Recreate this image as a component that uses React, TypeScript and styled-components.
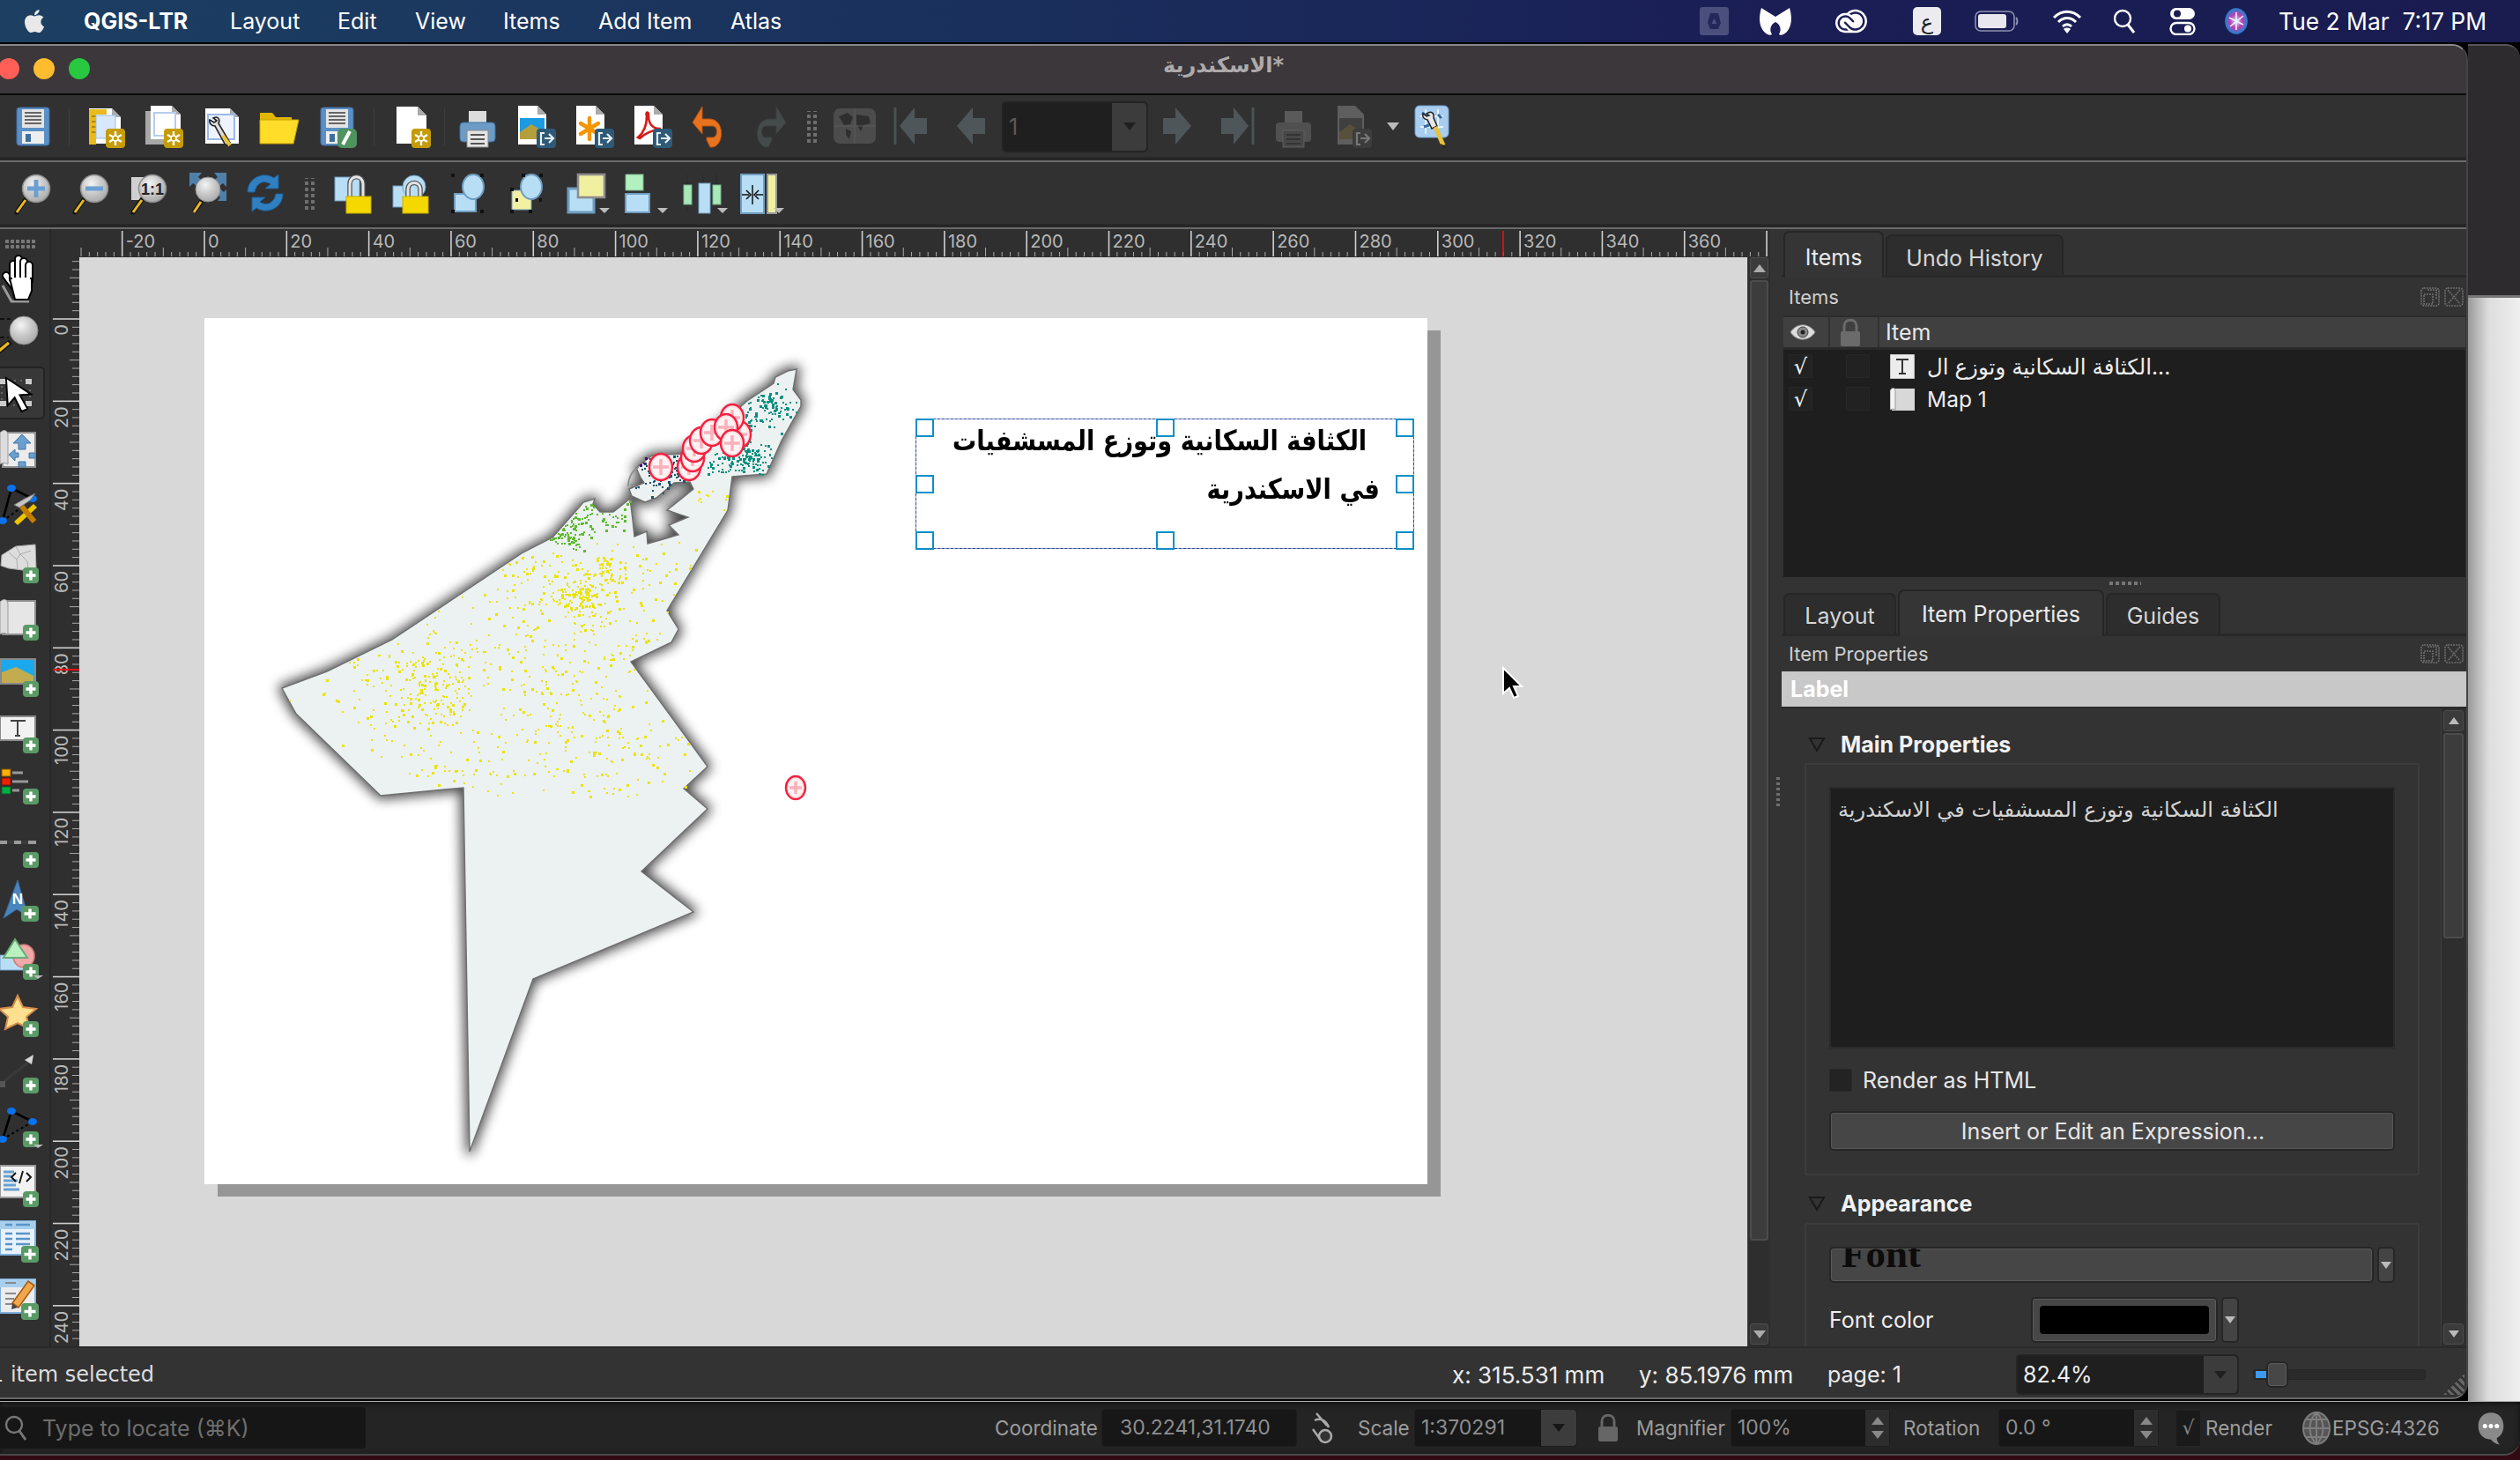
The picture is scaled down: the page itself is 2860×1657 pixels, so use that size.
import React from 'react';
import styled, { createGlobalStyle } from 'styled-components';
import { FaApple } from 'react-icons/fa';
import { SiAdobecreativecloud } from 'react-icons/si';

const Global = createGlobalStyle`
  html, body { margin: 0; padding: 0; width: 2860px; height: 1657px; overflow: hidden; background: #320a14; }
  body { font-family: Inter, "Noto Sans", "DejaVu Sans", sans-serif; }
  * { box-sizing: border-box; }
`;

/* ---------- page frame ---------- */
const Screen = styled.div`width:2860px;height:1657px;display:flex;flex-direction:column;overflow:hidden;`;
const MenuBar = styled.div`
  height:48px;flex:none;display:flex;align-items:center;color:#fff;font-size:25px;
  background:linear-gradient(90deg,#1c3f62 0%,#1a2f5c 40%,#1a1e55 70%,#1a1c50 100%);
`;
const AppleSlot = styled.span`margin-left:24px;width:71px;display:flex;`;
const MenuItem = styled.span<{ $w: number; $bold?: boolean }>`
  width:${p => p.$w}px;font-weight:${p => (p.$bold ? 700 : 400)};white-space:nowrap;
`;
const MenuRight = styled.div`margin-left:auto;display:flex;align-items:center;height:48px;padding-right:38px;`;
const TrayIcon = styled.span<{ $w: number }>`width:${p => p.$w}px;display:flex;justify-content:center;align-items:center;`;
const Clock = styled.span`font-size:26.4px;margin-left:20px;white-space:pre;`;

const Body = styled.div`height:1542px;flex:none;display:flex;background:#000;padding-top:2px;`;
const Win = styled.div`
  width:2801px;height:1538px;flex:none;display:flex;flex-direction:column;background:#333;
  border-top:2px solid #8a8788;border-right:2px solid #444;border-radius:0 18px 18px 0;overflow:hidden;position:relative;
  border-bottom:2px solid #666;
`;
const Strip = styled.div`flex:1;display:flex;flex-direction:column;`;
const StripDark = styled.div`height:288px;flex:none;background:#2e2b2e;border-top:2px solid #555;border-radius:0 16px 0 0;border-bottom:3px solid #777;`;
const StripLight = styled.div`flex:1;background:linear-gradient(90deg,#9a9a9a 0,#dedede 24px,#efefef 100%);`;

const TitleBar = styled.div`
  height:56px;flex:none;display:flex;justify-content:center;padding-top:8px;padding-right:22px;background:#3b373a;
  border-bottom:2px solid #0c0c0c;color:#aeaaac;font-size:24px;font-weight:700;font-family:"DejaVu Sans",sans-serif;
`;
const Lights = styled.div`position:absolute;left:-2px;top:14px;display:flex;gap:16px;`;
const Light = styled.span<{ $c: string }>`width:24px;height:24px;border-radius:50%;background:${p => p.$c};`;

const Toolbar = styled.div<{ $h: number; $pad: number }>`
  height:${p => p.$h}px;flex:none;display:flex;align-items:center;padding-left:${p => p.$pad}px;background:#313131;
  border-bottom:3px solid #262626;box-shadow:inset 0 -1px 0 #2a2a2a;
`;
const Rule = styled.div`height:2px;flex:none;background:#6a6a6a;`;
const Slot = styled.span<{ $w?: number }>`width:${p => p.$w ?? 66}px;flex:none;display:flex;justify-content:center;align-items:center;`;
const Sep = styled.span<{ $w: number }>`width:${p => p.$w}px;flex:none;display:flex;justify-content:center;align-items:center;&::after{content:"";width:1px;height:42px;background:#3d3d3d;}`;
const Grip = styled.span<{ $w: number }>`
  width:${p => p.$w}px;flex:none;display:flex;justify-content:center;
  &::after{content:"";width:11px;height:36px;background:repeating-linear-gradient(0deg,#6e6e6e 0 4px,transparent 4px 7px);
  -webkit-mask:repeating-linear-gradient(90deg,#000 0 4px,transparent 4px 7px);}
`;
const PageCombo = styled.div`
  width:166px;height:58px;flex:none;margin:0 0 0 2px;display:flex;border:2px solid #242424;border-radius:5px;background:#1f1f1f;
`;
const PageValue = styled.span`flex:1;color:#5a5a5a;font-size:25px;padding:12px 0 0 6px;`;
const ComboDrop = styled.span<{ $w: number }>`width:${p => p.$w}px;flex:none;display:flex;align-items:center;justify-content:center;background:#3c3c3c;border-radius:0 4px 4px 0;`;
const Tri = styled.span<{ $up?: boolean; $c?: string; $s?: number }>`
  width:0;height:0;border-left:${p => p.$s ?? 7}px solid transparent;border-right:${p => p.$s ?? 7}px solid transparent;
  ${p => (p.$up ? 'border-bottom' : 'border-top')}:${p => (p.$s ?? 7) + 2}px solid ${p => p.$c ?? '#aaa'};
`;

/* ---------- main area ---------- */
const MainRow = styled.div`flex:1;min-height:0;display:flex;`;
const SideTools = styled.div`width:58px;flex:none;display:flex;flex-direction:column;background:#303030;border-right:2px solid #282828;overflow:hidden;`;
const SideGrip = styled.div`
  height:25px;flex:none;margin:12px 0 0 6px;width:34px;
  background:repeating-linear-gradient(90deg,#777 0 4px,transparent 4px 6px);
  -webkit-mask:repeating-linear-gradient(0deg,#000 0 4px,transparent 4px 6px);max-height:10px;
`;
const SideSpacer = styled.div`height:3px;flex:none;`;
const SideSlot = styled.div<{ $on?: boolean }>`
  height:64.3px;flex:none;display:flex;align-items:center;width:${p => (p.$on ? 51 : 58)}px;position:relative;
  ${p => (p.$on ? 'border:2px solid #232323;border-left:none;border-radius:0 5px 5px 0;background:#383838;height:60px;margin:2px 0;' : '')}
`;
const Centre = styled.div`width:1951px;flex:none;display:grid;grid-template-columns:32px 1893px 26px;grid-template-rows:32px 1fr;min-height:0;`;
const HRulerCell = styled.div`grid-column:1 / 4;padding-left:32px;background:#2f2f2f;overflow:hidden;display:flex;`;
const VRulerCell = styled.div`background:#2f2f2f;overflow:hidden;display:flex;`;
const Canvas = styled.div`background:#d8d8d8;position:relative;overflow:hidden;padding:69px 0 0 142px;`;
const Sheet = styled.div`width:1388px;height:983px;background:#fff;box-shadow:15px 14px 0 #969696;position:relative;`;
const MapSvg = styled.svg`position:absolute;left:0;top:0;`;
const Cursor = styled.svg`position:absolute;left:1614px;top:464px;`;
const LabelBox = styled.div`
  position:absolute;left:807px;top:114px;width:566px;height:148px;
  border:1px dashed #7a0f55;outline:1px solid rgba(20,110,190,.55);outline-offset:-1px;
  display:flex;flex-direction:column;align-items:flex-end;
  font-family:"DejaVu Sans",sans-serif;font-weight:700;color:#000;font-size:32px;line-height:56px;
`;
const LabelLine = styled.div<{ $mr: number; $mt: number }>`margin:${p => p.$mt}px ${p => p.$mr}px 0 0;white-space:nowrap;transform:scaleX(.85);transform-origin:right center;`;
const Handle = styled.span<{ $x: number; $y: number }>`
  position:absolute;width:21px;height:21px;border:2px solid #0f8fc7;background:transparent;
  left:${p => p.$x}px;top:${p => p.$y}px;
`;

const VScroll = styled.div<{ $t: number; $b: number }>`
  display:flex;flex-direction:column;background:#2e2e2e;border-left:1px solid #3e3e3e;height:100%;padding:${p => p.$t}px 2px ${p => p.$b}px;width:100%;
`;
const ScrollBtn = styled.div`height:24px;flex:none;display:flex;align-items:center;justify-content:center;background:#3b3b3b;border:1px solid #4c4c4c;border-radius:3px;`;
const ScrollThumb = styled.div<{ $h: number }>`height:${p => p.$h}px;flex:none;margin-top:2px;background:#3c3c3c;border:2px solid #4c4c4c;border-radius:3px;`;
const ScrollFill = styled.div`flex:1;`;

const Splitter = styled.div`width:13px;flex:none;position:relative;background:#333;`;
const SplitGrip = styled.span`
  position:absolute;left:7px;top:621px;width:4px;height:34px;background:repeating-linear-gradient(0deg,#6e6e6e 0 3px,transparent 3px 6px);
`;
const Panel = styled.div`flex:1;min-width:0;display:flex;flex-direction:column;background:#333;`;
const TabStrip = styled.div<{ $h: number }>`height:${p => p.$h}px;flex:none;display:flex;align-items:flex-end;gap:2px;padding-left:2px;border-bottom:3px solid #292929;`;
const Tab = styled.div<{ $w: number; $on?: boolean; $dy: number }>`
  width:${p => p.$w}px;height:${p => (p.$on ? 53 : 46)}px;flex:none;display:flex;align-items:center;justify-content:center;
  font-size:25px;color:${p => (p.$on ? '#eaeaea' : '#d6d6d6')};background:${p => (p.$on ? '#353535' : '#2d2d2d')};
  border:2px solid #262626;border-bottom:none;border-radius:7px 7px 0 0;margin-bottom:${p => (p.$on ? -3 : 0)}px;
  padding-top:${p => p.$dy}px;
`;
const DockTitle = styled.div<{ $h: number }>`height:${p => p.$h}px;flex:none;display:flex;align-items:center;justify-content:space-between;padding:0 3px 0 8px;font-size:22px;color:#cfcfcf;`;
const DockBtns = styled.span`display:flex;gap:5px;`;
const Tree = styled.div`height:297px;flex:none;margin:0 1px 0 2px;background:#1e1e1e;display:flex;flex-direction:column;`;
const TreeHead = styled.div`height:39px;flex:none;display:flex;background:#404040;border-top:2px solid #2c2c2c;border-bottom:3px solid #2a2a2a;color:#e8e8e8;font-size:25px;`;
const HeadCell = styled.span<{ $w: number }>`width:${p => p.$w}px;flex:none;display:flex;align-items:center;justify-content:center;border-right:2px solid #303030;padding-right:8px;`;
const HeadText = styled.span`padding-left:7px;display:flex;align-items:center;`;
const TreeRow = styled.div`height:37px;flex:none;display:flex;align-items:center;padding-left:6px;color:#ededed;font-size:25px;`;
const RowCheck = styled.span<{ $mr: number }>`width:27px;height:27px;flex:none;background:#222;border:1px solid #262626;margin-right:${p => p.$mr}px;display:flex;align-items:center;justify-content:center;color:#f4f4f4;font-size:24px;font-family:"DejaVu Sans",sans-serif;`;
const RowText = styled.span`margin-left:14px;font-family:Inter,"DejaVu Sans",sans-serif;font-size:24.5px;`;
const Handlebar = styled.div`height:14px;flex:none;display:flex;justify-content:center;align-items:center;padding-left:2px;&::after{content:"";width:36px;height:4px;background:repeating-linear-gradient(90deg,#777 0 4px,transparent 4px 7px);}`;
const SectionBar = styled.div`height:40px;flex:none;background:#c8c8c8;color:#fff;font-weight:700;font-size:25px;display:flex;align-items:center;padding-left:10px;margin-right:-2px;`;
const PropsRow = styled.div`flex:1;min-height:0;display:flex;border-top:2px solid #2a2a2a;`;
const PropsBody = styled.div`flex:1;min-width:0;overflow:hidden;padding:0 24px 0 26px;`;
const PropsScroll = styled.div`width:28px;flex:none;margin-right:1px;`;
const GroupHead = styled.div<{ $mt: number }>`display:flex;align-items:center;height:30px;margin-top:${p => p.$mt}px;color:#f2f2f2;font-weight:700;font-size:25px;gap:17px;padding-left:4px;`;
const GroupBox = styled.div<{ $h: number; $mt: number }>`height:${p => p.$h}px;margin-top:${p => p.$mt}px;border:2px solid #3c3c3c;border-radius:2px;padding:25px 26px 0 26px;`;
const TextArea = styled.div`height:297px;background:#1e1e1e;border:2px solid #2a2a2a;color:#d4d4d4;font-family:"DejaVu Sans",sans-serif;font-size:24px;display:flex;justify-content:flex-start;padding:10px 0 0 8px;`;
const ArabicRun = styled.span`white-space:nowrap;`;
const CheckRow = styled.div`display:flex;align-items:center;gap:12px;margin-top:21px;height:29px;color:#e6e6e6;font-size:25px;`;
const CheckBoxEmpty = styled.span`width:26px;height:26px;background:#232323;border:1px solid #2a2a2a;`;
const WideButton = styled.div`height:45px;margin-top:21px;border:2px solid #262626;border-radius:5px;background:#464646;box-shadow:inset 0 0 0 1px #565656;color:#e6e6e6;font-size:25px;display:flex;align-items:center;justify-content:center;padding-left:2px;`;
const FontRow = styled.div`display:flex;gap:4px;`;
const FontBtn = styled.div`width:621px;height:41px;border:2px solid #262626;border-radius:5px;background:#464646;box-shadow:inset 0 0 0 1px #585858;overflow:hidden;padding-left:12px;font-family:"Liberation Serif",serif;font-size:45px;font-weight:700;color:#0c0c0c;line-height:12px;`;
const MiniDrop = styled.div<{ $h: number }>`width:20px;height:${p => p.$h}px;border:2px solid #262626;border-radius:5px;background:#444;display:flex;align-items:center;justify-content:center;`;
const ColorRow = styled.div`display:flex;align-items:center;margin-top:16px;`;
const ColorLabel = styled.span`width:229px;color:#efefef;font-size:25px;`;
const ColorBtn = styled.div`width:212px;height:52px;border:2px solid #262626;border-radius:5px;background:#474747;box-shadow:inset 0 0 0 1px #5a5a5a;padding:8px;margin-right:4px;`;
const Swatch = styled.div`width:100%;height:100%;background:#000;border-radius:4px;`;

/* ---------- status ---------- */
const StatusBar = styled.div`height:58px;flex:none;display:flex;align-items:center;background:#333;border-top:2px solid #2a2a2a;color:#ececec;font-size:25px;position:relative;padding-top:4px;`;
const SelectedText = styled.span`width:1659px;margin-left:-11px;flex:none;white-space:nowrap;font-family:"DejaVu Sans",sans-serif;font-size:24px;color:#dcdcdc;`;
const StatusText = styled.span<{ $w: number; $fs?: number }>`width:${p => p.$w}px;flex:none;white-space:nowrap;font-size:${p => p.$fs ?? 25}px;`;
const ZoomCombo = styled.div`width:253px;height:46px;flex:none;display:flex;background:#1f1f1f;border:2px solid #242424;border-radius:5px;margin:0 0 0 -4px;`;
const ZoomValue = styled.span`flex:1;padding-left:6px;color:#f0f0f0;font-size:25px;line-height:42px;`;
const SliderWrap = styled.div`width:196px;height:12px;margin:0 0 0 16px;background:#2a2a2a;border:1px solid #262626;border-radius:3px;position:relative;`;
const SliderFill = styled.span`position:absolute;left:2px;top:1px;width:14px;height:8px;background:#3a9bf0;`;
const SliderKnob = styled.span`position:absolute;left:14px;top:-10px;width:25px;height:30px;background:#474747;border:2px solid #262626;border-radius:6px;box-shadow:inset 0 0 0 1px #5c5c5c;`;
const CornerGrip = styled.span`position:absolute;right:2px;bottom:3px;width:24px;height:24px;background:repeating-linear-gradient(45deg,#666 0 3px,transparent 3px 6px);clip-path:polygon(100% 0,100% 100%,0 100%);`;

const BottomBar = styled.div`
  height:62px;flex:none;display:flex;align-items:center;background:#242424;border-top:1px solid #b0b0b0;
  border-bottom:2px solid #4a4a4a;border-radius:0 0 18px 0;color:#9d9d9d;font-size:22.500px;box-shadow:inset 0 2px 6px #111;
`;
const LocateBox = styled.div`width:415px;height:47px;flex:none;display:flex;align-items:center;gap:17px;padding-left:5px;background:#161616;border-radius:4px;color:#6e6e6e;font-size:25px;`;
const BarText = styled.span<{ $ml: number; $w: number }>`margin-left:${p => p.$ml}px;flex:none;width:${p => p.$w}px;white-space:nowrap;`;
const BarField = styled.div<{ $w: number }>`width:${p => p.$w}px;height:43px;flex:none;display:flex;background:#171717;border-radius:4px;color:#8e8e8e;font-size:23px;border:1px solid #1d1d1d;`;
const FieldValue = styled.span<{ $pl?: number }>`flex:1;padding-left:${p => p.$pl ?? 7}px;line-height:40px;white-space:nowrap;`;
const SpinCol = styled.span`width:27px;flex:none;display:flex;flex-direction:column;justify-content:space-around;align-items:center;background:#2d2d2d;padding:5px 0;`;
const BarIcon = styled.span<{ $ml: number }>`margin-left:${p => p.$ml}px;display:flex;flex:none;`;
const BarCheck = styled.span`margin-left:20px;width:27px;height:40px;background:#1a1a1a;display:flex;align-items:center;justify-content:center;color:#888;font-size:22px;font-family:"DejaVu Sans",sans-serif;flex:none;`;
const Desktop = styled.div`flex:1;background:#320a14;`;
const HiddenDefs = styled.svg`position:absolute;width:0;height:0;`;

/* ---------- icons ---------- */
const Ic = styled.svg.attrs({ width: 48, height: 48, viewBox: '0 0 48 48' })`display:block;overflow:visible;`;
const Sd = styled.svg.attrs({ width: 48, height: 56, viewBox: '0 0 48 56' })`display:block;overflow:visible;`;

const Gold = ({ x = 25, y = 26 }: { x?: number; y?: number }) => (
  <g transform={`translate(${x} ${y})`}>
    <rect width="22" height="22" rx="4" fill="#c59c07" />
    <path d="M11 3v16M4 7l14 8M18 7L4 15" stroke="#fff" strokeWidth="2.4" />
    <circle cx="11" cy="11" r="3" fill="#c59c07" stroke="#fff" strokeWidth="1.5" />
  </g>
);
const Exp = ({ c = '#2e5a78', l = '#e8eef2' }: { c?: string; l?: string }) => (
  <g transform="translate(25 26)">
    <rect width="22" height="22" rx="4" fill={c} />
    <path d="M9 5H5v13h4M9 11h9M14 6l5 5-5 5" stroke={l} strokeWidth="2.2" fill="none" />
  </g>
);
const Plus = ({ x = 26, y = 35 }: { x?: number; y?: number }) => (
  <g transform={`translate(${x} ${y})`}>
    <rect width="18" height="18" rx="4" fill="#5a9a66" />
    <path d="M9 3.5v11M3.5 9h11" stroke="#fff" strokeWidth="3.4" />
  </g>
);
const Doc = ({ x = 8, y = 1, w = 32, h = 42, f = '#fff', c = '#aaa' }: any) => (
  <g>
    <path d={`M${x} ${y}h${w - 10}l10 10v${h - 10}h-${w}z`} fill={f} />
    <path d={`M${x + w - 10} ${y}v10h10z`} fill={c} />
  </g>
);
const Floppy = ({ body = '#5b90c6', edge = '#3f6f9f' }: any) => (
  <g>
    <rect x="5" y="2" width="37" height="43" rx="3" fill={body} stroke={edge} />
    <rect x="11" y="4" width="25" height="21" fill="#e4e4e4" />
    <path d="M14 8h19M14 12h19M14 16h19M14 20h19" stroke="#666" strokeWidth="2" />
    <rect x="11" y="29" width="25" height="14" fill="#eee" />
    <rect x="15" y="32" width="6" height="9" fill="#3f6f9f" />
  </g>
);
const Mag = ({ children }: any) => (
  <g>
    <path d="M6 45l11-16" stroke="#111" strokeWidth="5" strokeLinecap="round" />
    <path d="M6 45l10-14" stroke="#e8b923" strokeWidth="3" />
    <circle cx="28" cy="18" r="15.5" fill="url(#glass)" stroke="#8d8d8d" strokeWidth="1.5" />
    {children}
  </g>
);
const Blue = '#b8def5', BEdge = '#6f9cc0';
const Shackle = ({ d }: { d: string }) => (
  <g>
    <path d={d} fill="none" stroke="#555" strokeWidth="5.500" />
    <path d={d} fill="none" stroke="#e4e4e4" strokeWidth="3" />
  </g>
);

const ToolIcons = {
  save: <Ic><Floppy /></Ic>,
  newLayout: <Ic><Doc x={6} y={3} w={36} h={40} /><rect x={6} y={4} width={20} height={6} fill="#e9b91d" /><rect x={6} y={4} width={8} height={40} fill="#e9b91d" /><path d="M9 12h5M9 18h5M9 24h5M9 30h5" stroke="#9a7b10" strokeWidth="1.5" /><rect x={14} y={11} width={22} height={26} fill="#d8e8fb" stroke="#9cc0e8" /><Gold /></Ic>,
  dup: <Ic><rect x={4} y={6} width={30} height={38} fill="#a8a8a8" /><Doc x={10} y={0} w={34} h={38} /><rect x={14} y={8} width={24} height={26} fill="#fff" stroke="#b6ccee" strokeWidth="2" /><Gold /></Ic>,
  mgr: <Ic><Doc x={6} y={3} w={38} h={40} /><rect x={9} y={10} width={30} height={28} fill="#eef3ff" stroke="#9cb9e8" strokeWidth="2" /><path d="M15 14c6-3 8 2 6 6l13 22-5 3-12-22c-4 0-7-3-6-7l5 3 3-2z" fill="#ddd" stroke="#222" strokeWidth="1.6" /><path d="M26 34l8 11" stroke="#e8c13a" strokeWidth="4" /></Ic>,
  folder: <Ic><path d="M2 8h14l4 5h18v5H2z" fill="#e2b700" /><path d="M2 16h44l-6 27H2z" fill="#ffdd28" stroke="#c9a400" /></Ic>,
  saveAs: <Ic><Floppy /><rect x={24} y={26} width={22} height={22} rx={5} fill="#4f935f" /><path d="M30 44l8-15" stroke="#fff" strokeWidth="4" /></Ic>,
  addPage: <Ic><Doc x={8} y={1} w={34} h={42} /><Gold x={25} y={26} /></Ic>,
  print: <Ic><rect x={14} y={6} width={20} height={16} fill="#ddd" /><rect x={4} y={19} width={40} height={22} rx={4} fill="#6c9cc6" stroke="#3f6f9f" /><rect x={12} y={28} width={24} height={19} fill="#e4e4e4" stroke="#888" /><path d="M16 33h16M16 38h16M16 43h16" stroke="#555" strokeWidth="2" /></Ic>,
  expImg: <Ic><Doc x={4} y={0} w={32} h={44} /><rect x={6} y={14} width={28} height={24} fill="#1d9be0" /><path d="M6 38V30l13-9 15 9v8z" fill="#b59f3c" /><Exp /></Ic>,
  expSvg: <Ic><Doc x={4} y={0} w={32} h={44} /><path d="M19 14v24M9 20l20 12M29 20L9 32" stroke="#f59500" strokeWidth="4.4" strokeLinecap="round" /><Exp /></Ic>,
  expPdf: <Ic><Doc x={4} y={0} w={32} h={44} /><path d="M8 36c6-5 10-14 10-24-2-6 3-6 2 0 0 8 5 15 14 14-10 2-18 5-24 11z" fill="none" stroke="#d61a1a" strokeWidth="2.6" /><Exp /></Ic>,
  undo: <Ic><path d="M15 1L4 19l11 13v-9h12c6 0 6 13 0 13h-7v3l4 8c16 2 18-32-1-32h-8z" fill="#e8731f" stroke="#b85510" /></Ic>,
  redo: <Ic><path d="M33 1l11 18-11 13v-9H21c-6 0-6 13 0 13h7v3l-4 8C8 49 6 15 25 15h8z" fill="#454a4a" stroke="#3a3e3e" /></Ic>,
  atlas: <Ic><rect x={0} y={3} width={48} height={40} rx={7} fill="#4c4c4c" /><path d="M6 12l10-4 6 5-3 8-7 1zM26 10l14 2 2 8-8 2-3 7-5-8zM14 26l6 3-2 9-4-5z" fill="#2f2f2f" /><path d="M0 23h48M24 3v40" stroke="#5a5a5a" /></Ic>,
  first: <Ic><path d="M4 2v42" stroke="#4b5154" strokeWidth="3" /><path d="M26 2L9 23l17 21V32h14V14H26z" fill="#4f565a" /></Ic>,
  prev: <Ic><path d="M26 2L8 23l18 21V32h14V14H26z" fill="#4f565a" /></Ic>,
  next: <Ic><path d="M22 2l18 21-18 21V32H8V14h14z" fill="#4f565a" /></Ic>,
  last: <Ic><path d="M44 2v42" stroke="#4b5154" strokeWidth="3" /><path d="M22 2l17 21-17 21V32H8V14h14z" fill="#4f565a" /></Ic>,
  printDim: <Ic><rect x={14} y={6} width={20} height={16} fill="#5a5a5a" /><rect x={4} y={19} width={40} height={22} rx={4} fill="#505050" /><rect x={12} y={28} width={24} height={19} fill="#484848" stroke="#5e5e5e" /><path d="M16 33h16M16 38h16M16 43h16" stroke="#333" strokeWidth="2" /></Ic>,
  expDim: <Ic><path d="M8 0h20l10 10v34H8z" fill="#5e5e5e" /><rect x={10} y={14} width={26} height={24} fill="#3f3f3f" /><path d="M10 38v-8l12-9 14 9v8z" fill="#57503a" /><Exp c="#3c3c3c" l="#777" /></Ic>,
  atlasCfg: <Ic><rect x={2} y={0} width={38} height={36} rx={5} fill="#a9cdef" stroke="#6e9fd0" /><path d="M8 12h26M8 24h26M14 4v28M28 4v28" stroke="#e6f1fc" strokeWidth="2" /><path d="M10 8l6 4M12 24l6-2M28 10l4 4" stroke="#3a6a9c" strokeWidth="3" /><path d="M15 9c6-4 9 0 8 5l4 9-6 3-5-10c-4-1-6-3-5-7l4 3 3-1z" fill="#e6e6e6" stroke="#222" strokeWidth="1.5" /><path d="M25 24l9 21" stroke="#e8c13a" strokeWidth="5" /><path d="M31 44l5 3" stroke="#222" strokeWidth="2" /></Ic>,

  zoomIn: <Ic><Mag><path d="M28 8v20M18 18h20" stroke="#6aa0d4" strokeWidth="5" /></Mag></Ic>,
  zoomOut: <Ic><Mag><path d="M18 18h20" stroke="#6aa0d4" strokeWidth="5" /></Mag></Ic>,
  zoomOne: <Ic><rect x={4} y={5} width={26} height={26} fill="#d0d0d0" /><Mag><text x={28} y={25} fontSize="18" fontFamily="Liberation Sans, sans-serif" fill="#222" textAnchor="middle" fontWeight="700">1:1</text></Mag></Ic>,
  zoomFull: <Ic><path d="M4 0h14l-4 5 6 5-5 7-7-5-4 4zM46 0H32l4 5-6 5 5 7 7-5 4 4zM46 32H36l3-4-6-5 5-5 5 4 3-3z" fill="#4f80aa" /><path d="M9 45l9-13" stroke="#111" strokeWidth="5" /><path d="M9 45l8-12" stroke="#e8b923" strokeWidth="3" /><circle cx={25} cy={19} r={14} fill="url(#glass)" stroke="#8d8d8d" /></Ic>,
  refresh: <Ic><path d="M4 22C4 6 22-2 34 6l5-4v16H24l6-5c-7-5-16-2-18 9z" fill="#2f7fc1" stroke="#1f5f96" /><path d="M44 24c0 16-18 24-30 16l-5 4V28h15l-6 5c7 5 16 2 18-9z" fill="#2f7fc1" stroke="#1f5f96" /></Ic>,
  lock: <Ic><rect x={2} y={5} width={28} height={27} fill={Blue} stroke={BEdge} /><Shackle d="M19 28V13c0-11 15-11 15 0v15" /><rect x={15} y={27} width={28} height={19} fill="#f5d800" stroke="#c4ad00" /></Ic>,
  lock2: <Ic><rect x={2} y={15} width={22} height={24} fill={Blue} stroke={BEdge} /><circle cx={26} cy={16} r={13} fill={Blue} stroke={BEdge} /><Shackle d="M19 28V19c0-10 14-10 14 0v9" /><rect x={13} y={27} width={29} height={19} fill="#f5d800" stroke="#c4ad00" /></Ic>,
  group: <Ic><rect x={6} y={24} width={24} height={20} fill={Blue} stroke={BEdge} strokeWidth="2" /><ellipse cx={27} cy={16} rx={12} ry={14} fill={Blue} stroke={BEdge} strokeWidth="2" /><path d="M2 1h4v4H2zM35 1h4v4h-4zM2 42h4v4H2zM35 42h4v4h-4z" fill="#111" /></Ic>,
  ungroup: <Ic><rect x={5} y={20} width={22} height={22} fill="#f2f0a3" stroke={BEdge} /><ellipse cx={27} cy={16} rx={12} ry={14} fill={Blue} stroke={BEdge} strokeWidth="2" /><path d="M16 1h4v4h-4zM36 1h4v4h-4zM3 17h4v4H3zM9 29h3v4H9zM3 42h4v4H3zM24 42h4v4h-4zM36 29h3v4h-3z" fill="#111" /></Ic>,
  raise: <Ic><rect x={3} y={18} width={29} height={27} fill={Blue} stroke={BEdge} strokeWidth="3" /><rect x={14} y={2} width={30} height={26} fill="#f1f0a0" stroke="#8d8d8d" strokeWidth="2.6" /><path d="M38 40h12l-6 6z" fill="#bbb" /></Ic>,
  alignIcon: <Ic><path d="M2 0v48" stroke="#1e1e1e" strokeWidth="1.5" /><rect x={2} y={2} width={20} height={18} fill="#b2f0c0" stroke="#7bb58a" /><rect x={2} y={24} width={27} height={21} fill={Blue} stroke={BEdge} strokeWidth="2" /><path d="M38 40h12l-6 6z" fill="#bbb" /></Ic>,
  distribute: <Ic><path d="M6 2v42M24 2v42M39 2v42" stroke="#2a2a2a" /><rect x={2} y={14} width={9} height={22} fill="#a9e8b8" stroke="#7bb58a" /><rect x={19} y={12} width={13} height={34} fill={Blue} stroke={BEdge} /><rect x={35} y={14} width={9} height={22} fill="#a9e8b8" stroke="#7bb58a" /><path d="M40 40h12l-6 6z" fill="#bbb" /></Ic>,
  resize: <Ic><rect x={1} y={2} width={26} height={44} fill={Blue} stroke={BEdge} strokeWidth="2" /><rect x={31} y={2} width={10} height={44} fill="#f1f0a0" stroke="#999" strokeWidth="2" /><path d="M14 14v22M2 25h8M7 20l5 5-5 5M26 25h-8M21 20l-5 5 5 5" stroke="#111" strokeWidth="1.5" fill="none" /><path d="M38 40h12l-6 6z" fill="#bbb" /></Ic>,
};

const Finger = ({ d }: { d: string }) => (
  <g>
    <path d={d} stroke="#000" strokeWidth="10" strokeLinecap="round" />
    <path d={d} stroke="#fff" strokeWidth="6" strokeLinecap="round" />
  </g>
);
const Side = {
  hand: <Sd><path d="M6 32l10 18h20" fill="none" stroke="#999" strokeWidth="3" transform="translate(-3 3)" /><Finger d="M7 24l9 12" /><Finger d="M15 28V11" /><Finger d="M21 28V5" /><Finger d="M27 28V8" /><Finger d="M33 30V12" /><path d="M11 27h25v14l-4 10H17z" fill="#fff" stroke="#000" strokeWidth="2" /><path d="M14 26h20v8H14z" fill="#fff" /></Sd>,
  zoom: <Sd><path d="M0 9h12M0 30h10" stroke="#111" strokeWidth="2" strokeDasharray="5 3" /><path d="M-2 46l14-11" stroke="#111" strokeWidth="6" /><path d="M-2 46l12-10" stroke="#e8b923" strokeWidth="3.4" /><circle cx={27} cy={22} r={16} fill="url(#glass)" stroke="#8c8c8c" /></Sd>,
  select: <Sd><rect x={2} y={14} width={32} height={28} fill="none" stroke="#666" strokeWidth="2" strokeDasharray="2 5" /><path d="M0 12h7v6H0zM29 12h7v6h-7zM0 37h7v6H0zM29 37h7v6h-7z" fill="#ccc" /><path d="M7 11l29 19-13 1 9 16-7 3-8-16-8 9z" fill="#fff" stroke="#000" strokeWidth="2" transform="translate(0 0) scale(0.98)" /></Sd>,
  move: <Sd><rect x={3} y={9} width={37} height={39} fill="#ececec" stroke="#8f8f8f" strokeWidth="2" /><path d="M0 9c5-5 9-2 9 3v33c-3-2-7-2-9 0z" fill="#ddd" stroke="#999" /><path d="M25 11l10 10h-6v7h-8v-7h-6z" fill="#6a9fd0" stroke="#4577a4" /><path d="M10 34l7-6v4h4v5h-4v4zM33 32h7v6h-7zM21 42h8v6h-8z" fill="#6a9fd0" stroke="#4577a4" /></Sd>,
  nodes: <Sd><path d="M13 8L3 45M13 8l24 12" stroke="#000" strokeWidth="2.6" /><path d="M3 45l20-14" stroke="#000" strokeWidth="2" strokeDasharray="3 3" /><ellipse cx={13} cy={8} rx={5} ry={4} fill="#0a72ee" /><ellipse cx={37} cy={20} rx={5} ry={4} fill="#0a72ee" /><ellipse cx={3} cy={45} rx={5} ry={4} fill="#0a72ee" /><path d="M16 46l22-20 4 4-22 20z" fill="#ecc400" /><path d="M24 28l15 18" stroke="#c07d00" strokeWidth="6" /><path d="M16 27l12-7 12-6-6 8-12 8z" fill="#c4c4c4" stroke="#777" /></Sd>,
  addMap: <Sd><path d="M2 20l16-10 22-2 1 26-8 4-23-3-9-3z" fill="#ddd" stroke="#aaa" /><path d="M10 17l9 8 1 11M18 10l5 9-4 6M23 19l12-4M23 19l8 8 1 9" stroke="#aaa" fill="none" /><Plus x={26} y={34} /></Sd>,
  addPaper: <Sd><rect x={3} y={7} width={37} height={38} fill="#e6e6e6" stroke="#8f8f8f" strokeWidth="2" /><path d="M0 8c5-5 9-2 9 3v34c-3-2-7-2-9 0z" fill="#ddd" stroke="#999" /><Plus x={26} y={34} /></Sd>,
  addPic: <Sd><rect x={0} y={9} width={40} height={28} fill="#1aa9ee" stroke="#8a8a8a" strokeWidth="2" /><path d="M2 36V24l16-6 20 10v8z" fill="#c2ac50" /><Plus x={26} y={34} /></Sd>,
  addText: <Sd><rect x={0} y={10} width={40} height={27} fill="#f2f2f2" stroke="#8a8a8a" strokeWidth="2" /><path d="M12 15h17M20 15v17M17 32h6" stroke="#444" strokeWidth="2" /><Plus x={26} y={34} /></Sd>,
  legend: <Sd><rect x={2} y={5} width={10} height={8} fill="#ffb000" stroke="#7a5200" /><rect x={2} y={15} width={10} height={8} fill="#f22000" stroke="#7a1000" /><rect x={2} y={25} width={10} height={8} fill="#00b040" stroke="#00602a" /><path d="M14 9h12M14 19h18M14 29h8" stroke="#999" strokeWidth="3" /><Plus x={26} y={27} /></Sd>,
  scale: <Sd><path d="M0 24h41" stroke="#9a9a9a" strokeWidth="4" /><path d="M8 24h8M24 24h8" stroke="#3a3a3a" strokeWidth="4" /><Plus x={26} y={35} /></Sd>,
  north: <Sd><path d="M20 3L4 46l15-10 13 8z" fill="#4b85be" stroke="#3a6c9c" /><text x={20} y={30} fontSize="17" fontWeight="700" fill="#fff" fontFamily="Liberation Sans, sans-serif" textAnchor="middle">N</text><g transform="translate(24 32)"><rect width="20" height="18" rx="4" fill="#5a9a66" /><path d="M10 3.5v11M3.5 9h13" stroke="#fff" strokeWidth="3.4" /></g></Sd>,
  shape: <Sd><rect x={0} y={24} width={36} height={17} fill={Blue} stroke={BEdge} /><ellipse cx={27} cy={25} rx={12} ry={13} fill="#f0a8a8" stroke="#d07878" strokeWidth="1.6" /><path d="M17 6l14 21H4z" fill="#b8f0c0" stroke="#6aaa7a" strokeWidth="2" /><Plus x={26} y={34} /><path d="M38 47h11l-6 4z" fill="#bbb" /></Sd>,
  star: <Sd><path d="M20 5l6 13 15 2-11 9 4 14-14-7-14 7 3-14L-1 20l15-2z" fill="#ffe08f" stroke="#d78c4b" strokeWidth="2" /><Plus x={26} y={34} /></Sd>,
  arrow: <Sd><path d="M0 42l38-30" stroke="#3a3a3a" strokeWidth="3" /><rect x={-2} y={38} width={8} height={7} fill="#555" /><path d="M38 8l-10 6 8 5z" fill="#d8d8d8" /><Plus x={26} y={34} /></Sd>,
  poly: <Sd><path d="M13 8L3 40M13 8l24 12" stroke="#000" strokeWidth="2.6" /><path d="M3 40l34-20" stroke="#000" strokeWidth="2" strokeDasharray="3 3" /><ellipse cx={13} cy={8} rx={5} ry={4} fill="#0a72ee" /><ellipse cx={37} cy={20} rx={5} ry={4} fill="#0a72ee" /><ellipse cx={3} cy={40} rx={5} ry={4} fill="#0a72ee" /><Plus x={26} y={31} /><path d="M38 46h11l-6 4z" fill="#bbb" /></Sd>,
  html: <Sd><rect x={0} y={5} width={40} height={36} fill="#f2f2f2" stroke="#9a9a9a" strokeWidth="2" /><path d="M4 12h12M4 17h9M4 22h16M4 27h14M4 32h18" stroke="#6a9fd0" strokeWidth="3" /><path d="M18 13l-5 5 5 5M30 13l5 5-5 5M26 11l-4 14" stroke="#111" strokeWidth="1.9" fill="none" /><Plus x={26} y={34} /></Sd>,
  table: <Sd><rect x={0} y={4} width={40} height={38} fill="#e8f2fb" stroke="#7fb0da" strokeWidth="2" /><rect x={0} y={4} width={40} height={9} fill="#a8cfee" /><path d="M6 8h8M18 8h16M6 18h8M18 18h16M6 24h8M18 24h16M6 30h8M18 30h16M6 36h8" stroke="#5a94c8" strokeWidth="2.4" /><g transform="translate(24 32)"><rect width="20" height="19" rx="4" fill="#5a9a66" /><path d="M10 3.5v12M3.5 9.500h13" stroke="#fff" strokeWidth="3.400" /></g></Sd>,
  note: <Sd><rect x={0} y={6} width={40} height={38} fill="#ececec" stroke="#7fb0da" strokeWidth="2" /><rect x={0} y={6} width={40} height={9} fill="#a8cfee" /><path d="M6 10h12M6 22h12M6 28h10M6 34h16" stroke="#8a8a8a" strokeWidth="2" /><path d="M14 33l18-25 7 5-18 25z" fill="#f1a74c" stroke="#a85b10" strokeWidth="1.6" /><path d="M14 33l-1 7 7-2z" fill="#444" /><g transform="translate(24 33)"><rect width="20" height="19" rx="4" fill="#5a9a66" /><path d="M10 3.500v12M3.500 9.500h13" stroke="#fff" strokeWidth="3.400" /></g></Sd>,
};

const MiniBtn = ({ close }: { close?: boolean }) => (
  <svg width="22" height="22" viewBox="0 0 22 22" fill="none" stroke="#6e6e6e" strokeWidth="1.6" strokeDasharray="2 1">
    <rect x="1" y="1" width="20" height="20" rx="3" />
    {close ? <path d="M4 3l14 16M18 3L4 19" /> : <path d="M8 3h10v10M4 8h10v11H4z" />}
  </svg>
);
const CollapseTri = () => (
  <svg width="20" height="20" viewBox="0 0 20 20"><path d="M2 3h16L10 17z" fill="none" stroke="#1a1a1a" strokeWidth="2" /></svg>
);
const Padlock = ({ c = '#6b6b6b' }: { c?: string }) => (
  <svg width="24" height="31" viewBox="0 0 24 31"><path d="M5 16V8c0-9 14-9 14 0v8" fill="none" stroke={c} strokeWidth="3" /><rect x="1" y="14" width="22" height="17" rx="2" fill={c} /></svg>
);
const Eye = () => (
  <svg width="30" height="22" viewBox="0 0 30 22"><path d="M1 11C8 0 22 0 29 11 22 22 8 22 1 11z" fill="#ddd" stroke="#888" /><circle cx="15" cy="11" r="6" fill="#888" stroke="#444" /><circle cx="15" cy="11" r="2.500" fill="#222" /></svg>
);

/* ---------- data ---------- */
const H_ZERO = 232, V_ZERO = 362, PX = 4.666;
const HRuler = () => {
  const t: React.ReactNode[] = [];
  for (let n = -30; n <= 380; n += 2) {
    const x = H_ZERO + n * PX;
    if (x < 91) continue;
    const major = n % 20 === 0, mid = n % 10 === 0;
    t.push(<line key={n} x1={x} x2={x} y1={major ? 2 : mid ? 21 : 26} y2={31} stroke={major ? '#cfcfcf' : '#aaa'} strokeWidth={major ? 1.6 : 1} />);
    if (major && n < 380) t.push(<text key={`t${n}`} x={x + 4} y={21} fontSize="20" fill="#b9b9b9" fontFamily="Inter, sans-serif">{n}</text>);
  }
  return (
    <svg width="1919" height="32" viewBox="90 0 1919 32">
      {t}
      <line x1="1706" x2="1706" y1="2" y2="31" stroke="#f01010" strokeWidth="1.6" />
    </svg>
  );
};
const VRuler = () => {
  const t: React.ReactNode[] = [];
  for (let n = -14; n <= 250; n += 2) {
    const y = V_ZERO + n * PX;
    const major = n % 20 === 0, mid = n % 10 === 0;
    t.push(<line key={n} y1={y} y2={y} x1={major ? 60 : mid ? 79 : 82} x2={90} stroke={major ? '#cfcfcf' : '#aaa'} strokeWidth={major ? 1.6 : 1} />);
    if (major && y + 30 < 1528) t.push(<text key={`t${n}`} transform={`translate(77 ${y + 6}) rotate(-90)`} textAnchor="end" fontSize="20" fill="#b9b9b9" fontFamily="Inter, sans-serif">{n}</text>);
  }
  return (
    <svg width="32" height="1236" viewBox="58 292 32 1236">
      {t}
      <line x1="60" x2="90" y1="760" y2="760" stroke="#f01010" strokeWidth="2" />
    </svg>
  );
};

const OUTLINE: [number, number][] = [
  [320, 781], [371, 762], [445, 726], [523, 674], [592, 628], [627, 610], [657, 576], [662, 570], [675, 566], [673, 572], [681, 581], [696, 581], [715, 566],
  [718, 590], [720, 609], [734, 603], [735, 617], [770, 607], [759, 596], [781, 587], [757, 579], [787, 555], [783, 547], [765, 548], [745, 565], [732, 570], [717, 563],
  [714, 555], [731, 548], [727, 542], [722, 531], [740, 517], [775, 515], [800, 497], [848, 455], [857, 449], [878, 435], [880, 428], [894, 421], [904, 419], [900, 442], [909, 454], [909, 461],
  [887, 500], [870, 538], [831, 541], [826, 579], [757, 693], [770, 714], [762, 729], [716, 751], [803, 870], [776, 895], [803, 918], [728, 989], [787, 1035], [605, 1111], [533, 1307], [526, 894], [432, 903], [336, 810],
];
const inside = (x: number, y: number) => {
  let c = false;
  for (let i = 0, j = OUTLINE.length - 1; i < OUTLINE.length; j = i++) {
    const [xi, yi] = OUTLINE[i], [xj, yj] = OUTLINE[j];
    if (yi > y !== yj > y && x < ((xj - xi) * (y - yi)) / (yj - yi) + xi) c = !c;
  }
  return c;
};
const rng = (seed: number) => () => {
  seed |= 0; seed = (seed + 0x6d2b79f5) | 0;
  let t = Math.imul(seed ^ (seed >>> 15), 1 | seed);
  t = (t + Math.imul(t ^ (t >>> 7), 61 | t)) ^ t;
  return ((t ^ (t >>> 14)) >>> 0) / 4294967296;
};
const dots = (seed: number, blobs: [number, number, number, number][], keep: (x: number, y: number) => boolean) => {
  const r = rng(seed);
  let d = '';
  for (const [cx, cy, sd, n] of blobs) {
    for (let i = 0; i < n; i++) {
      const a = r() * 6.283, m = Math.sqrt(-2 * Math.log(r() + 1e-6)) * sd;
      const x = Math.round(cx + Math.cos(a) * m), y = Math.round(cy + Math.sin(a) * m * 0.8);
      if (!inside(x, y) || !keep(x, y)) continue;
      const s = r() > 0.7 ? 3 : 2;
      d += `M${x} ${y}h${s}v${s}h-${s}z`;
    }
  }
  return d;
};
const PATH_YELLOW = dots(7, [
  [661, 679, 16, 110], [692, 645, 14, 50], [640, 700, 60, 110], [497, 755, 28, 60], [453, 776, 40, 50], [497, 793, 18, 50], [520, 830, 70, 90],
  [660, 830, 75, 170], [560, 760, 100, 140], [700, 680, 60, 50], [400, 770, 50, 40], [600, 650, 30, 40], [770, 650, 30, 30], [810, 555, 16, 26], [700, 860, 40, 50],
], (x, y) => y < 905 && !(x > 790 && y < 542) && !(x < 716 && y < 610 && x > 630) && !(x > 716 && y < 556));
const PATH_GREEN = dots(11, [[640, 606, 14, 110], [668, 585, 12, 46], [700, 578, 10, 22]], (x, y) => y < 625 && x < 718);
const PATH_TEAL = dots(13, [[872, 455, 14, 80], [845, 480, 14, 70], [852, 520, 12, 90], [820, 525, 10, 40]], (x, y) => x > 795);
const PATH_NAVY = dots(17, [[748, 538, 14, 70], [770, 535, 10, 30]], (x, y) => x < 800 && y < 572);

const Hospital = ({ x, y, r = 15 }: { x: number; y: number; r?: number }) => (
  <g>
    <ellipse cx={x} cy={y} rx={r - 2} ry={r} fill="#fde0e4" stroke="#f5203f" strokeWidth="2.4" />
    <ellipse cx={x} cy={y} rx={r - 5} ry={r - 3} fill="#fff2f3" stroke="none" />
    <path d={`M${x} ${y - r + 6}v${2 * r - 12}M${x - r + 6} ${y}h${2 * r - 12}`} stroke="#f9b2bc" strokeWidth="3.500" />
  </g>
);
const HOSPITALS: [number, number][] = [[750, 530], [782, 530], [786, 520], [788, 509], [796, 500], [808, 491], [839, 493], [831, 474], [824, 485], [831, 503]];

const MapDrawing = () => {
  const pts = OUTLINE.map(p => p.join(',')).join(' ');
  return (
    <MapSvg width="1388" height="983" viewBox="232 361 1388 983">
      <defs>
        <filter id="mapBlur" x="-20%" y="-20%" width="140%" height="140%">
          <feGaussianBlur stdDeviation="7" />
        </filter>
      </defs>
      <polygon points={pts} fill="#000" stroke="#000" strokeWidth="8" strokeLinejoin="round" opacity=".72" filter="url(#mapBlur)" />
      <polygon points={pts} fill="#ecf1f1" stroke="#6f6f6f" strokeWidth="1.4" />
      <path d="M713 552c0-12 5-18 12-22M730 520l7-3M716 550l10 4" fill="none" stroke="#8a8a8a" strokeWidth="1.5" />
      <path d={PATH_YELLOW} fill="#eae400" />
      <path d={PATH_GREEN} fill="#5dbb2e" />
      <path d={PATH_TEAL} fill="#049080" />
      <path d={PATH_NAVY} fill="#17536e" />
      <path d="M732 519h3v3h-3zM726 527h3v3h-3zM730 525h3v2h-3z" fill="#4a0a70" />
      {HOSPITALS.map(([x, y]) => <Hospital key={`${x}${y}`} x={x} y={y} />)}
      <Hospital x={903} y={894} r={13} />
    </MapSvg>
  );
};

const A_TITLE = 'الكثافة السكانية وتوزع المسشفيات في الاسكندرية';
const HANDLES: [number, number][] = [[-1, -1], [272, -1], [544, -1], [-1, 63], [544, 63], [-1, 127], [272, 127], [544, 127]];

export default function App() {
  return (
    <Screen>
      <Global />
      <HiddenDefs>
        <defs>
          <radialGradient id="glass" cx="40%" cy="32%" r="70%">
            <stop offset="0%" stopColor="#f4f4f4" /><stop offset="55%" stopColor="#c8c8c8" /><stop offset="100%" stopColor="#aaa" />
          </radialGradient>
        </defs>
      </HiddenDefs>

      <MenuBar>
        <AppleSlot><FaApple size={30} color="#e9e9e9" /></AppleSlot>
        <MenuItem $w={166} $bold>QGIS-LTR</MenuItem>
        <MenuItem $w={122}>Layout</MenuItem>
        <MenuItem $w={88}>Edit</MenuItem>
        <MenuItem $w={100}>View</MenuItem>
        <MenuItem $w={108}>Items</MenuItem>
        <MenuItem $w={150}>Add Item</MenuItem>
        <MenuItem $w={80}>Atlas</MenuItem>
        <MenuRight>
          <TrayIcon $w={78}><svg width="33" height="32" viewBox="0 0 33 32"><rect width="33" height="32" rx="3" fill="#4a4f7e" /><path d="M12 7h9l3 11-3 7h-9l-3-7z" fill="#23285a" /><path d="M16.500 13l3 6h-6z" fill="#4a4f7e" /></svg></TrayIcon>
          <TrayIcon $w={62}><svg width="38" height="34" viewBox="0 0 38 34"><path d="M3 2l16 10L35 2c3 10 3 20-3 27-3 3-7 5-9 3 3-5 2-11-4-14-6 3-7 9-4 14-2 2-6 0-9-3C0 22 0 12 3 2z" fill="#fff" /></svg></TrayIcon>
          <TrayIcon $w={110}><SiAdobecreativecloud size={36} color="#fff" /></TrayIcon>
          <TrayIcon $w={62}><svg width="32" height="32" viewBox="0 0 32 32"><rect width="32" height="32" rx="5" fill="#ececf0" /><text x="16" y="25" fontSize="24" textAnchor="middle" fill="#222" fontFamily="DejaVu Sans, sans-serif">ع</text></svg></TrayIcon>
          <TrayIcon $w={96}><svg width="50" height="24" viewBox="0 0 50 24"><rect x="1" y="1" width="44" height="22" rx="6" fill="none" stroke="#8f93b0" strokeWidth="1.600" /><rect x="4" y="4" width="32" height="16" rx="3" fill="#e8e8ee" /><path d="M47 8c2 2 2 6 0 8" stroke="#8f93b0" strokeWidth="2" fill="none" /></svg></TrayIcon>
          <TrayIcon $w={64}><svg width="34" height="28" viewBox="0 0 34 28"><path d="M2 10c9-9 21-9 30 0M7 15c6-6 14-6 20 0M12 20c3-3 7-3 10 0" fill="none" stroke="#fff" strokeWidth="3" /><path d="M17 28l-4-5c2-2 6-2 8 0z" fill="#fff" /></svg></TrayIcon>
          <TrayIcon $w={66}><svg width="26" height="28" viewBox="0 0 26 28"><circle cx="11" cy="11" r="9" fill="none" stroke="#fff" strokeWidth="2.400" /><path d="M17 18l7 9" stroke="#fff" strokeWidth="3" /></svg></TrayIcon>
          <TrayIcon $w={66}><svg width="30" height="32" viewBox="0 0 30 32"><rect x="1" y="1" width="28" height="13" rx="6.500" fill="#fff" /><circle cx="9" cy="7.500" r="4" fill="#1a1d52" /><rect x="1.500" y="18" width="27" height="13" rx="6.500" fill="#1a1d52" stroke="#fff" strokeWidth="2.400" /><circle cx="21" cy="24.500" r="4" fill="#fff" /></svg></TrayIcon>
          <TrayIcon $w={56}><svg width="28" height="32" viewBox="0 0 28 32"><defs><radialGradient id="siri" cx="50%" cy="50%" r="60%"><stop offset="0" stopColor="#bfe8ff" /><stop offset=".45" stopColor="#c23ab0" /><stop offset=".75" stopColor="#2e7fd0" /><stop offset="1" stopColor="#1a2a6a" /></radialGradient></defs><ellipse cx="14" cy="16" rx="13" ry="15" fill="url(#siri)" /><path d="M14 6v20M6 12l16 8M22 10L7 22" stroke="#eaf4ff" strokeWidth="1.600" /></svg></TrayIcon>
          <Clock>Tue 2 Mar  7:17 PM</Clock>
        </MenuRight>
      </MenuBar>

      <Body>
        <Win>
          <Lights>
            <Light $c="#ff5f57" /><Light $c="#febc2e" /><Light $c="#28c840" />
          </Lights>
          <TitleBar><span dir="rtl">*الاسكندرية</span></TitleBar>

          <Toolbar $h={74} $pad={5}>
            <Slot>{ToolIcons.save}</Slot><Sep $w={15} />
            <Slot>{ToolIcons.newLayout}</Slot><Slot>{ToolIcons.dup}</Slot><Slot>{ToolIcons.mgr}</Slot><Slot>{ToolIcons.folder}</Slot><Slot>{ToolIcons.saveAs}</Slot><Sep $w={17} />
            <Slot>{ToolIcons.addPage}</Slot><Sep $w={10} />
            <Slot>{ToolIcons.print}</Slot><Slot>{ToolIcons.expImg}</Slot><Slot>{ToolIcons.expSvg}</Slot><Slot>{ToolIcons.expPdf}</Slot>
            <Slot>{ToolIcons.undo}</Slot><Slot>{ToolIcons.redo}</Slot><Grip $w={32} />
            <Slot>{ToolIcons.atlas}</Slot><Slot>{ToolIcons.first}</Slot><Slot>{ToolIcons.prev}</Slot>
            <PageCombo><PageValue>1</PageValue><ComboDrop $w={39}><Tri $c="#1f1f1f" /></ComboDrop></PageCombo>
            <Slot>{ToolIcons.next}</Slot><Slot>{ToolIcons.last}</Slot><Slot>{ToolIcons.printDim}</Slot><Slot>{ToolIcons.expDim}</Slot>
            <Slot $w={28}><Tri $c="#bbb" /></Slot><Slot $w={66}>{ToolIcons.atlasCfg}</Slot>
          </Toolbar>
          <Rule />
          <Toolbar $h={74} $pad={4}>
            <Slot>{ToolIcons.zoomIn}</Slot><Slot>{ToolIcons.zoomOut}</Slot><Slot>{ToolIcons.zoomOne}</Slot><Slot>{ToolIcons.zoomFull}</Slot><Slot>{ToolIcons.refresh}</Slot>
            <Grip $w={35} />
            <Slot>{ToolIcons.lock}</Slot><Slot>{ToolIcons.lock2}</Slot><Slot>{ToolIcons.group}</Slot><Slot>{ToolIcons.ungroup}</Slot><Slot>{ToolIcons.raise}</Slot><Slot>{ToolIcons.alignIcon}</Slot><Slot>{ToolIcons.distribute}</Slot><Slot>{ToolIcons.resize}</Slot>
          </Toolbar>
          <Rule />

          <MainRow>
            <SideTools>
              <SideGrip />
              <SideSpacer />
              <SideSlot>{Side.hand}</SideSlot>
              <SideSlot>{Side.zoom}</SideSlot>
              <SideSlot $on>{Side.select}</SideSlot>
              <SideSlot>{Side.move}</SideSlot>
              <SideSlot>{Side.nodes}</SideSlot>
              <SideSlot>{Side.addMap}</SideSlot>
              <SideSlot>{Side.addPaper}</SideSlot>
              <SideSlot>{Side.addPic}</SideSlot>
              <SideSlot>{Side.addText}</SideSlot>
              <SideSlot>{Side.legend}</SideSlot>
              <SideSlot>{Side.scale}</SideSlot>
              <SideSlot>{Side.north}</SideSlot>
              <SideSlot>{Side.shape}</SideSlot>
              <SideSlot>{Side.star}</SideSlot>
              <SideSlot>{Side.arrow}</SideSlot>
              <SideSlot>{Side.poly}</SideSlot>
              <SideSlot>{Side.html}</SideSlot>
              <SideSlot>{Side.table}</SideSlot>
              <SideSlot>{Side.note}</SideSlot>
            </SideTools>

            <Centre>
              <HRulerCell><HRuler /></HRulerCell>
              <VRulerCell><VRuler /></VRulerCell>
              <Canvas>
                <Sheet>
                  <MapDrawing />
                  <LabelBox>
                    <LabelLine $mr={53} $mt={-4}>الكثافة السكانية وتوزع المسشفيات</LabelLine>
                    <LabelLine $mr={38} $mt={-1}>في الاسكندرية</LabelLine>
                    {HANDLES.map(([x, y]) => <Handle key={`${x}-${y}`} $x={x} $y={y} />)}
                  </LabelBox>
                </Sheet>
                <Cursor width="26" height="38" viewBox="0 0 26 38">
                  <path d="M2 2v29l7-6 5 11 5-2-5-11h9z" fill="#000" stroke="#fff" strokeWidth="2" />
                </Cursor>
              </Canvas>
              <VScroll $t={0} $b={2}>
                <ScrollBtn><Tri $up $c="#aaa" /></ScrollBtn>
                <ScrollThumb $h={1090} />
                <ScrollFill />
                <ScrollBtn><Tri $c="#aaa" /></ScrollBtn>
              </VScroll>
            </Centre>

            <Splitter><SplitGrip /></Splitter>

            <Panel>
              <TabStrip $h={55}>
                <Tab $w={114} $on $dy={5}>Items</Tab>
                <Tab $w={202} $dy={5}>Undo History</Tab>
              </TabStrip>
              <DockTitle $h={43}>Items<DockBtns><MiniBtn /><MiniBtn close /></DockBtns></DockTitle>
              <Tree>
                <TreeHead>
                  <HeadCell $w={53}><Eye /></HeadCell>
                  <HeadCell $w={56}><Padlock /></HeadCell>
                  <HeadText>Item</HeadText>
                </TreeHead>
                <TreeRow>
                  <RowCheck $mr={38}>√</RowCheck><RowCheck $mr={23} />
                  <svg width="28" height="28" viewBox="0 0 28 28"><rect width="28" height="28" fill="#ececec" stroke="#999" /><path d="M7 6h14M14 6v16M10 22h8" stroke="#333" strokeWidth="2" /></svg>
                  <RowText dir="rtl">...الكثافة السكانية وتوزع ال</RowText>
                </TreeRow>
                <TreeRow>
                  <RowCheck $mr={38}>√</RowCheck><RowCheck $mr={23} />
                  <svg width="28" height="28" viewBox="0 0 28 28"><rect x="2" y="2" width="26" height="25" fill="#d8d8d8" /><path d="M0 4c3-4 6-3 6 1v21c-2-1-4-1-6 0z" fill="#f3f3f3" stroke="#999" /></svg>
                  <RowText>Map 1</RowText>
                </TreeRow>
              </Tree>
              <Handlebar />
              <TabStrip $h={53}>
                <Tab $w={128} $dy={3}>Layout</Tab>
                <Tab $w={234} $on $dy={1}>Item Properties</Tab>
                <Tab $w={130} $dy={3}>Guides</Tab>
              </TabStrip>
              <DockTitle $h={40}>Item Properties<DockBtns><MiniBtn /><MiniBtn close /></DockBtns></DockTitle>
              <SectionBar>Label</SectionBar>
              <PropsRow>
                <PropsBody>
                  <GroupHead $mt={26}><CollapseTri />Main Properties</GroupHead>
                  <GroupBox $h={468} $mt={6}>
                    <TextArea><ArabicRun dir="rtl">{A_TITLE}</ArabicRun></TextArea>
                    <CheckRow><CheckBoxEmpty />Render as HTML</CheckRow>
                    <WideButton>Insert or Edit an Expression...</WideButton>
                  </GroupBox>
                  <GroupHead $mt={17}><CollapseTri />Appearance</GroupHead>
                  <GroupBox $h={200} $mt={7}>
                    <FontRow><FontBtn>Font</FontBtn><MiniDrop $h={41}><Tri $c="#bbb" $s={6} /></MiniDrop></FontRow>
                    <ColorRow>
                      <ColorLabel>Font color</ColorLabel>
                      <ColorBtn><Swatch /></ColorBtn>
                      <MiniDrop $h={52}><Tri $c="#bbb" $s={6} /></MiniDrop>
                    </ColorRow>
                  </GroupBox>
                </PropsBody>
                <PropsScroll>
                  <VScroll $t={2} $b={2}>
                    <ScrollBtn><Tri $up $c="#bbb" $s={6} /></ScrollBtn>
                    <ScrollThumb $h={233} />
                    <ScrollFill />
                    <ScrollBtn><Tri $c="#bbb" $s={6} /></ScrollBtn>
                  </VScroll>
                </PropsScroll>
              </PropsRow>
            </Panel>
          </MainRow>

          <StatusBar>
            <SelectedText>1 item selected</SelectedText>
            <StatusText $w={212} $fs={26}>x: 315.531 mm</StatusText>
            <StatusText $w={214} $fs={26}>y: 85.1976 mm</StatusText>
            <StatusText $w={218}>page: 1</StatusText>
            <ZoomCombo><ZoomValue>82.4%</ZoomValue><ComboDrop $w={38}><Tri $c="#1f1f1f" /></ComboDrop></ZoomCombo>
            <SliderWrap><SliderFill /><SliderKnob /></SliderWrap>
            <CornerGrip />
          </StatusBar>
        </Win>
        <Strip><StripDark /><StripLight /></Strip>
      </Body>

      <BottomBar>
        <LocateBox>
          <svg width="26" height="30" viewBox="0 0 26 30"><circle cx="11" cy="11" r="9" fill="none" stroke="#777" strokeWidth="2.400" /><path d="M17 18l7 10" stroke="#777" strokeWidth="3" /></svg>
          Type to locate (⌘K)
        </LocateBox>
        <BarText $ml={714} $w={121}>Coordinate</BarText>
        <BarField $w={222}><FieldValue $pl={20}>30.2241,31.1740</FieldValue></BarField>
        <BarIcon $ml={14}>
          <svg width="28" height="42" viewBox="0 0 28 42" fill="none" stroke="#aaa" strokeWidth="2.500"><path d="M8 4l12 14M6 12c8-4 14 2 16 8" /><circle cx="18" cy="30" r="7" fill="#333" /><path d="M4 22l10 14" /></svg>
        </BarIcon>
        <BarText $ml={27} $w={64}>Scale</BarText>
        <BarField $w={185}><FieldValue>1:370291</FieldValue><ComboDrop $w={40}><Tri $c="#161616" /></ComboDrop></BarField>
        <BarIcon $ml={23}><Padlock c="#666" /></BarIcon>
        <BarText $ml={20} $w={107}>Magnifier</BarText>
        <BarField $w={181}><FieldValue>100%</FieldValue><SpinCol><Tri $up $c="#888" /><Tri $c="#888" /></SpinCol></BarField>
        <BarText $ml={15} $w={108}>Rotation</BarText>
        <BarField $w={182}><FieldValue>0.0 °</FieldValue><SpinCol><Tri $up $c="#888" /><Tri $c="#888" /></SpinCol></BarField>
        <BarCheck>√</BarCheck>
        <BarText $ml={6} $w={109}>Render</BarText>
        <BarIcon $ml={0}>
          <svg width="34" height="42" viewBox="0 0 34 42" fill="none" stroke="#7d7d7d" strokeWidth="2"><ellipse cx="17" cy="21" rx="15" ry="18" fill="#555" /><path d="M2 21h30M5 11h24M5 31h24M17 3v36M17 3c-10 10-10 26 0 36M17 3c10 10 10 26 0 36" /></svg>
        </BarIcon>
        <BarText $ml={1} $w={164}>EPSG:4326</BarText>
        <BarIcon $ml={0}>
          <svg width="32" height="40" viewBox="0 0 38 46"><path d="M19 2C8 2 2 10 2 20s6 18 17 18c2 3 6 6 12 7-3-3-4-6-4-9 6-3 9-9 9-16C36 10 30 2 19 2z" fill="#8a8a8a" /><circle cx="11" cy="20" r="3" fill="#fff" /><circle cx="19" cy="20" r="3" fill="#fff" /><circle cx="27" cy="20" r="3" fill="#fff" /></svg>
        </BarIcon>
      </BottomBar>
      <Desktop />
    </Screen>
  );
}
